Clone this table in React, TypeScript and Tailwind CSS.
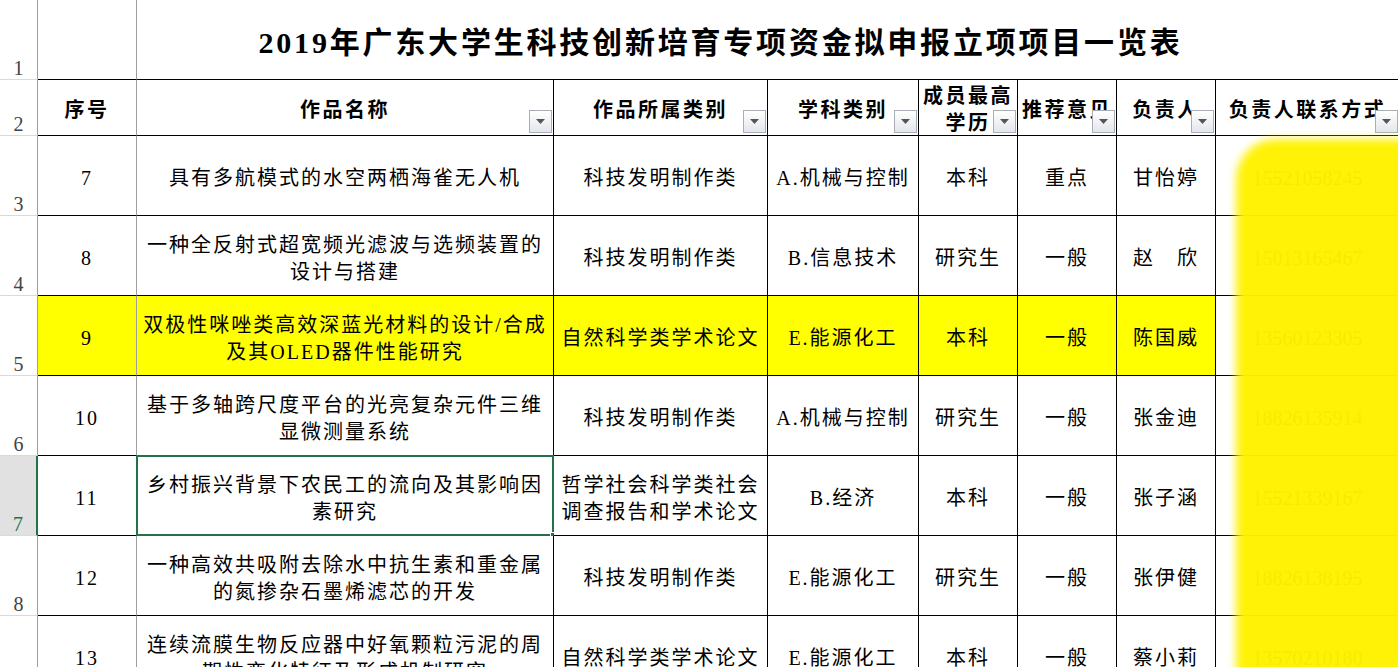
import React from "react"

const font = "font-['Liberation_Serif','Noto_Sans_CJK_SC',serif]"

// column widths B..I
const colW = [
  "w-[99px]",
  "w-[417px]",
  "w-[214px]",
  "w-[151px]",
  "w-[99px]",
  "w-[99px]",
  "w-[99px]",
  "w-[184px]",
]

const rows = [
  { no: "7", name: ["具有多航模式的水空两栖海雀无人机"], type: ["科技发明制作类"], subj: "A.机械与控制", edu: "本科", rec: "重点", lead: "甘怡婷", phone: "15521058245" },
  { no: "8", name: ["一种全反射式超宽频光滤波与选频装置的", "设计与搭建"], type: ["科技发明制作类"], subj: "B.信息技术", edu: "研究生", rec: "一般", lead: "赵　欣", phone: "15013165467" },
  { no: "9", name: ["双极性咪唑类高效深蓝光材料的设计/合成", "及其OLED器件性能研究"], type: ["自然科学类学术论文"], subj: "E.能源化工", edu: "本科", rec: "一般", lead: "陈国威", phone: "13560123305", yellow: true },
  { no: "10", name: ["基于多轴跨尺度平台的光亮复杂元件三维", "显微测量系统"], type: ["科技发明制作类"], subj: "A.机械与控制", edu: "研究生", rec: "一般", lead: "张金迪", phone: "18826135914" },
  { no: "11", name: ["乡村振兴背景下农民工的流向及其影响因", "素研究"], type: ["哲学社会科学类社会", "调查报告和学术论文"], subj: "B.经济", edu: "本科", rec: "一般", lead: "张子涵", phone: "15521339167", selected: true },
  { no: "12", name: ["一种高效共吸附去除水中抗生素和重金属", "的氮掺杂石墨烯滤芯的开发"], type: ["科技发明制作类"], subj: "E.能源化工", edu: "研究生", rec: "一般", lead: "张伊健", phone: "18826138195" },
  { no: "13", name: ["连续流膜生物反应器中好氧颗粒污泥的周", "期性变化特征及形成机制研究"], type: ["自然科学类学术论文"], subj: "E.能源化工", edu: "本科", rec: "一般", lead: "蔡小莉", phone: "13570210180" },
]

function Dropdown() {
  return (
    <div className="absolute right-[1px] bottom-[2px] w-[23px] h-[23px] border border-[#a9aeb6] bg-linear-to-b from-white to-[#e3e6eb] flex items-center justify-center">
      <svg width="9" height="5" viewBox="0 0 9 5">
        <path d="M0 0h9L4.5 5z" fill="#555" />
      </svg>
    </div>
  )
}

function RowHead({ n, h, active }: { n: string; h: string; active?: boolean }) {
  return (
    <div
      className={`w-[38px] ${h} shrink-0 border-b border-b-[#dadada] flex items-end justify-center pb-[1px] text-[20px] leading-none ${font} ${
        active ? "bg-[#e1e1e1] text-[#217346] border-r-2 border-r-[#217346]" : "bg-white text-[#444] border-r border-r-[#9e9e9e]"
      }`}
    >
      {n}
    </div>
  )
}

function Lines({ lines }: { lines: string[] }) {
  return (
    <div className="flex flex-col items-center leading-[27px]">
      {lines.map((l) => (
        <span key={l} className="whitespace-nowrap">
          {l}
        </span>
      ))}
    </div>
  )
}

export default function App() {
  const headers = ["序号", "作品名称", "作品所属类别", "学科类别", "成员最高学历", "推荐意见", "负责人", "负责人联系方式"]

  return (
    <div className={`relative w-[1398px] h-[667px] overflow-hidden bg-white text-black ${font}`}>
      {/* row 1: title */}
      <div className="flex h-[80px]">
        <RowHead n="1" h="h-[80px]" />
        <div className="w-[99px] shrink-0 border-r border-r-[#9e9e9e] border-b border-b-black" />
        <div className="flex-1 border-b border-b-black flex items-center justify-center pt-[5px] pr-[94px] text-[30px] font-bold tracking-[2.8px] whitespace-nowrap">
          2019年广东大学生科技创新培育专项资金拟申报立项项目一览表
        </div>
      </div>

      {/* row 2: header */}
      <div className="flex h-[56px]">
        <RowHead n="2" h="h-[56px]" />
        {headers.map((t, i) => (
          <div
            key={t}
            className={`relative ${colW[i]} shrink-0 border-b border-b-black ${
              i === 0 ? "border-r border-r-[#9e9e9e]" : "border-r border-r-black"
            } flex items-center justify-center pt-[5px] overflow-hidden text-[20px] font-bold tracking-[2.5px]`}
          >
            {i === 4 ? <Lines lines={["成员最高", "学历"]} /> : <span className="whitespace-nowrap">{t}</span>}
            {i > 0 && <Dropdown />}
          </div>
        ))}
      </div>

      {/* data rows */}
      {rows.map((r, idx) => {
        const cells = [[r.no], r.name, r.type, [r.subj], [r.edu], [r.rec], [r.lead], [r.phone]]
        return (
          <div key={r.no} className="flex h-[80px]">
            <RowHead n={String(idx + 3)} h="h-[80px]" active={r.selected} />
            {cells.map((c, i) => (
              <div
                key={i}
                className={`relative ${colW[i]} shrink-0 border-b border-b-black ${
                  i === 0 ? "border-r border-r-[#9e9e9e]" : "border-r border-r-black"
                } ${r.yellow && i < 7 ? "bg-[#ffff00]" : "bg-white"} flex items-center justify-center pt-[6px] text-[20px] tracking-[2px] ${
                  i === 7 ? "tracking-normal" : ""
                }`}
              >
                <Lines lines={c} />
                {r.selected && i === 1 && (
                  <>
                    <div className="absolute -left-[1px] -top-[1px] -right-[1px] -bottom-[1px] border-2 border-[#217346]" />
                    <div className="absolute -right-[4px] -bottom-[4px] w-[7px] h-[7px] bg-[#217346] border border-white" />
                  </>
                )}
              </div>
            ))}
          </div>
        )
      })}

      {/* highlighter scribble covering contact numbers */}
      <div className="absolute left-[1236px] top-[139px] w-[200px] h-[580px] bg-[#fff200] opacity-[0.97] rounded-tl-[40px] blur-[4px]" />
    </div>
  )
}
